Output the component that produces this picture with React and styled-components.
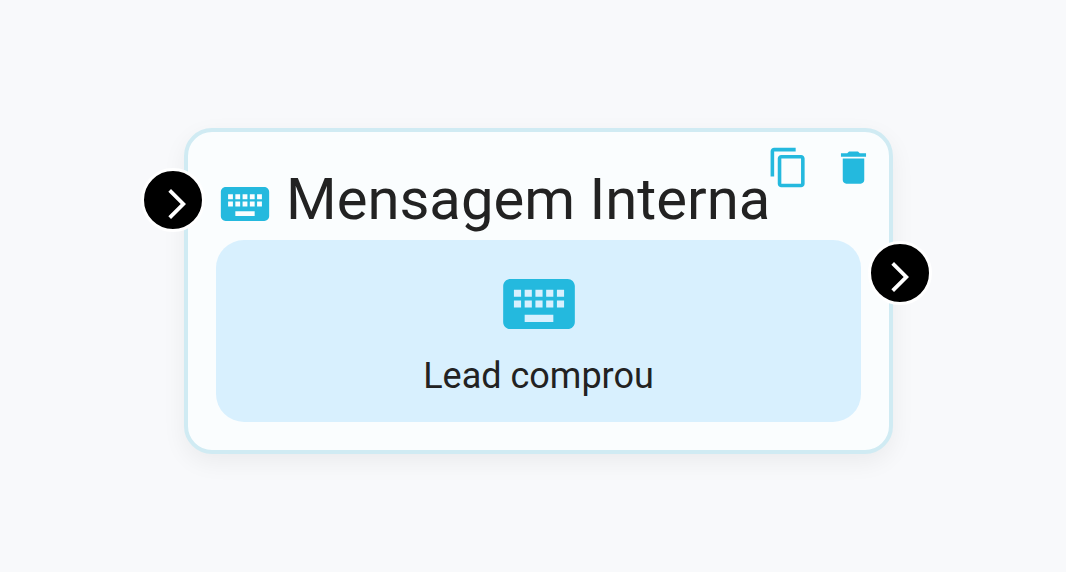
import * as React from "react"
import styled, { createGlobalStyle } from "styled-components"
import {
  MdArrowForwardIos,
  MdContentCopy,
  MdDelete,
  MdKeyboard,
} from "react-icons/md"

const GlobalStyle = createGlobalStyle`
  :root {
    --canvas: #f8f9fb;
    --card: #fafdfe;
    --card-border: #d0ebf3;
    --panel: #d8f0fe;
    --accent: #24b9de;
    --text: #222222;
  }

  * {
    box-sizing: border-box;
  }

  body {
    margin: 0;
    background-color: var(--canvas);
    color: var(--text);
    font-family: Roboto, "Liberation Sans", sans-serif;
  }
`

const Canvas = styled.main`
  min-height: 100vh;
  padding: 128px 173px 118px 184px;
`

const Card = styled.article`
  position: relative;
  padding: 28px;
  background-color: var(--card);
  border: 4px solid var(--card-border);
  border-radius: 28px;
  box-shadow: 0 8px 24px rgba(0, 0, 0, 0.06);
`

const Header = styled.header`
  display: flex;
  align-items: center;
  gap: 12px;
`

const HeaderIcon = styled(MdKeyboard)`
  flex: none;
  box-sizing: content-box;
  width: 58px;
  height: 58px;
  padding-top: 8px;
  color: var(--accent);
`

const Title = styled.h1`
  margin: 0;
  padding-bottom: 2px;
  font-size: 58px;
  font-weight: 400;
  line-height: 78px;
  white-space: nowrap;
`

const Actions = styled.div`
  position: absolute;
  top: 14px;
  right: 14px;
  display: flex;
  gap: 22px;
`

const ActionButton = styled.button`
  display: flex;
  padding: 0;
  border: 0;
  background: none;
  color: var(--accent);
  font-size: 43px;
  cursor: pointer;
`

const Panel = styled.section`
  display: flex;
  flex-direction: column;
  align-items: center;
  padding: 21px 21px 17px;
  background-color: var(--panel);
  border-radius: 28px;
`

const PanelIcon = styled(MdKeyboard)`
  width: 86px;
  height: 86px;
  color: var(--accent);
`

const PanelText = styled.p`
  margin: 0;
  font-size: 36px;
  line-height: 58px;
`

const Handle = styled.button`
  position: absolute;
  top: ${props => (props.$side === "left" ? 36 : 109)}px;
  ${props => (props.$side === "left" ? "left: -47px;" : "right: -43px;")}
  display: flex;
  align-items: center;
  justify-content: center;
  width: 64px;
  height: 64px;
  padding: 8px 0 0 ${props => (props.$side === "left" ? 8 : 0)}px;
  border: 3px solid #ffffff;
  border-radius: 50%;
  background-color: #000000;
  color: #ffffff;
  font-size: 36px;
  cursor: crosshair;
`

const App = () => {
  return (
    <>
      <GlobalStyle />
      <Canvas>
        <Card>
          <Handle type="button" $side="left" aria-label="Entrada">
            <MdArrowForwardIos />
          </Handle>
          <Header>
            <HeaderIcon />
            <Title>Mensagem Interna</Title>
          </Header>
          <Actions>
            <ActionButton type="button" aria-label="Duplicar">
              <MdContentCopy />
            </ActionButton>
            <ActionButton type="button" aria-label="Excluir">
              <MdDelete />
            </ActionButton>
          </Actions>
          <Panel>
            <PanelIcon />
            <PanelText>Lead comprou</PanelText>
          </Panel>
          <Handle type="button" $side="right" aria-label="Saída">
            <MdArrowForwardIos />
          </Handle>
        </Card>
      </Canvas>
    </>
  )
}

export default App
